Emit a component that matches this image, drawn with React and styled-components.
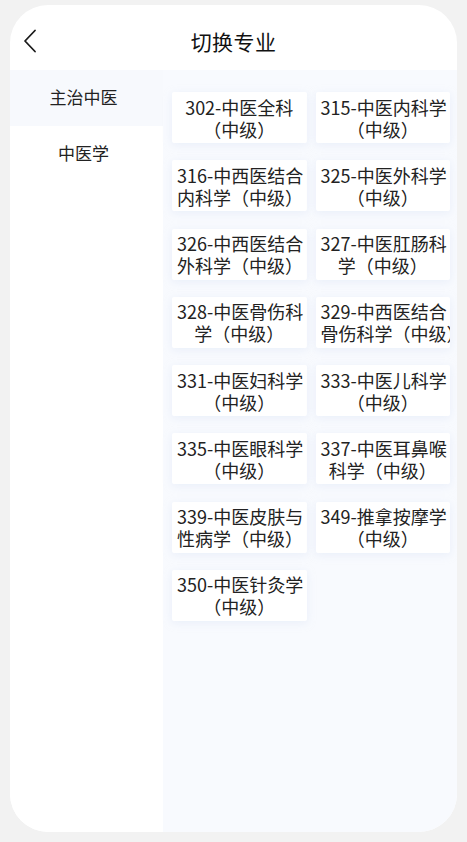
import styled, { createGlobalStyle } from 'styled-components'
import { useState } from 'react'

const GlobalStyle = createGlobalStyle`
  html, body {
    margin: 0;
    padding: 0;
    background: #f2f2f2;
    font-family: "Noto Sans CJK SC", "Noto Sans", sans-serif;
  }
`

const Page = styled.div`
  padding: 5px 10px 10px;
  box-sizing: border-box;
  height: 842px;
`

const Sheet = styled.div`
  height: 827px;
  background: #fff;
  border-radius: 38px;
  overflow: hidden;
  display: flex;
  flex-direction: column;
`

const Header = styled.div`
  height: 65px;
  flex-shrink: 0;
  display: flex;
  align-items: center;
  justify-content: center;
  position: relative;
  padding-top: 6px;
  box-sizing: border-box;
`

const BackButton = styled.button`
  position: absolute;
  left: 5px;
  top: 18px;
  width: 30px;
  height: 36px;
  padding: 0;
  border: none;
  background: none;
  display: flex;
  align-items: center;
  justify-content: center;
`

const Title = styled.h1`
  margin: 0;
  font-size: 21px;
  font-weight: 400;
  color: #111;
  letter-spacing: 0.4px;
`

const Body = styled.div`
  flex: 1;
  display: flex;
  min-height: 0;
`

const Sidebar = styled.div`
  width: 153px;
  flex-shrink: 0;
  background: #fff;
`

const SideItem = styled.div`
  height: 56px;
  box-sizing: border-box;
  display: flex;
  align-items: center;
  justify-content: center;
  padding: 0 6px 3px 0;
  font-size: 17px;
  color: #222;
  background: ${p => (p.$active ? '#f7f9fd' : '#fff')};
`

const Panel = styled.div`
  flex: 1;
  background: #f8fafe;
  padding: 22px 7px 20px 9px;
  display: grid;
  grid-template-columns: 1fr 1fr;
  column-gap: 9px;
  row-gap: 17.25px;
  align-content: start;
`

const Card = styled.div`
  height: 51px;
  background: #fff;
  border-radius: 2px;
  box-shadow: 0 2px 8px rgba(205, 218, 240, 0.35);
  padding: 3px 5px;
  box-sizing: border-box;
  overflow: hidden;
  display: flex;
  flex-direction: column;
  justify-content: center;
  text-align: center;
`

const Line = styled.div`
  font-size: 18px;
  line-height: 22px;
  color: #222;
  white-space: nowrap;
`

const categories = ['主治中医', '中医学']

const majors = [
  ['302-中医全科', '（中级）'],
  ['315-中医内科学', '（中级）'],
  ['316-中西医结合', '内科学（中级）'],
  ['325-中医外科学', '（中级）'],
  ['326-中西医结合', '外科学（中级）'],
  ['327-中医肛肠科', '学（中级）'],
  ['328-中医骨伤科', '学（中级）'],
  ['329-中西医结合', '骨伤科学（中级）'],
  ['331-中医妇科学', '（中级）'],
  ['333-中医儿科学', '（中级）'],
  ['335-中医眼科学', '（中级）'],
  ['337-中医耳鼻喉', '科学（中级）'],
  ['339-中医皮肤与', '性病学（中级）'],
  ['349-推拿按摩学', '（中级）'],
  ['350-中医针灸学', '（中级）'],
]

export default function App() {
  const [active, setActive] = useState(0)

  return (
    <>
      <GlobalStyle />
      <Page>
        <Sheet>
          <Header>
            <BackButton>
              <svg width="14" height="24" viewBox="0 0 14 24" fill="none">
                <path d="M12 1.5 L2 12 L12 22.5" stroke="#1a1a1a" strokeWidth="1.8" strokeLinecap="round" strokeLinejoin="round" />
              </svg>
            </BackButton>
            <Title>切换专业</Title>
          </Header>
          <Body>
            <Sidebar>
              {categories.map((c, i) => (
                <SideItem key={c} $active={i === active} onClick={() => setActive(i)}>
                  {c}
                </SideItem>
              ))}
            </Sidebar>
            <Panel>
              {majors.map(lines => (
                <Card key={lines[0]}>
                  {lines.map(l => (
                    <Line key={l}>{l}</Line>
                  ))}
                </Card>
              ))}
            </Panel>
          </Body>
        </Sheet>
      </Page>
    </>
  )
}
